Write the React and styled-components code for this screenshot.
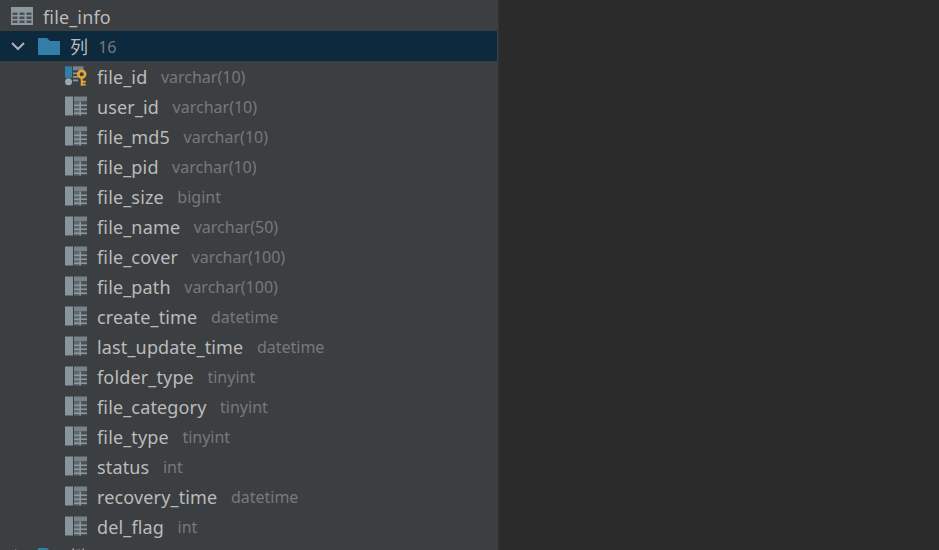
import React from "react";
import styled, { createGlobalStyle } from "styled-components";

const GlobalStyle = createGlobalStyle`
  html, body {
    margin: 0;
    padding: 0;
    height: 100%;
    background: #2b2b2b;
    overflow: hidden;
  }
`;

const Page = styled.div`
  display: flex;
  width: 939px;
  height: 550px;
  overflow: hidden;
  background: #2b2b2b;
  font-family: "Noto Sans", "Noto Sans CJK SC", sans-serif;
`;

const Tree = styled.div`
  width: 498px;
  height: 550px;
  padding-top: 1px;
  box-sizing: border-box;
  overflow: hidden;
  flex-shrink: 0;
  background: #3c3f41;
`;

const Divider = styled.div`
  width: 1px;
  background: #323232;
  flex-shrink: 0;
`;

const Row = styled.div`
  display: flex;
  align-items: center;
  width: 497px;
  height: 30px;
  box-sizing: border-box;
  padding-left: ${(p) => p.$indent}px;
  background: ${(p) => (p.$selected ? "#0d293e" : "transparent")};
`;

const Slot = styled.span`
  display: flex;
  align-items: center;
  justify-content: flex-start;
  width: ${(p) => p.$width}px;
  height: 30px;
  margin-left: ${(p) => p.$gap || 0}px;
  flex-shrink: 0;
`;

const Name = styled.span`
  margin-left: 10px;
  padding-top: 2px;
  font-size: 18px;
  line-height: 30px;
  letter-spacing: 0.15px;
  color: #bbbbbb;
  white-space: nowrap;
`;

const Type = styled.span`
  margin-left: ${(p) => p.$gap}px;
  padding-top: 2px;
  font-size: 16px;
  line-height: 30px;
  color: #787878;
  white-space: nowrap;
`;

const TableIcon = () => (
  <svg width="22" height="18" viewBox="0 0 22 18">
    <rect width="22" height="18" fill="#8d999f" />
    {[5.5, 9.5, 13.5].map((y) =>
      [1.5, 8.5, 15.5].map((x) => (
        <rect key={`${x}-${y}`} x={x} y={y} width="5" height="2.5" fill="#4a5053" />
      ))
    )}
  </svg>
);

const ChevronDown = () => (
  <svg width="14" height="9" viewBox="0 0 14 9">
    <path d="M1 1 L7 7 L13 1" fill="none" stroke="#afb1b3" strokeWidth="2" />
  </svg>
);

const ChevronRight = () => (
  <svg width="14" height="14" viewBox="0 0 14 14">
    <path d="M4 1 L10 7 L4 13" fill="none" stroke="#afb1b3" strokeWidth="2" />
  </svg>
);

const Folder = () => (
  <svg width="22" height="17" viewBox="0 0 22 17">
    <path d="M0 0 H9 L12 3 H22 V17 H0 Z" fill="#317fa6" />
  </svg>
);

const ColumnIcon = () => (
  <svg width="22" height="20" viewBox="0 0 22 20">
    <rect x="0" y="0.5" width="8" height="19" fill="#87969d" />
    <rect x="9" y="0.5" width="13" height="5" fill="#76838a" />
    <rect x="9" y="5.5" width="6" height="14" fill="#5f696e" />
    <rect x="15" y="5.5" width="7" height="14" fill="#4a5053" />
    <rect x="9" y="8.5" width="13" height="1.5" fill="#8d999f" />
    <rect x="9" y="12.5" width="13" height="1.5" fill="#8d999f" />
    <rect x="9" y="16.5" width="13" height="1.5" fill="#8d999f" />
    <rect x="14.5" y="5.5" width="1.5" height="14" fill="#8d999f" />
  </svg>
);

const KeyColumnIcon = () => (
  <svg width="25" height="22" viewBox="0 0 25 22">
    <rect x="0" y="0" width="8" height="13" fill="#317fa6" />
    <circle cx="4" cy="17.5" r="4" fill="#9aa7b0" />
    <rect x="9" y="0" width="12" height="4.5" fill="#76838a" />
    <rect x="9" y="7" width="6" height="2" fill="#8d999f" />
    <rect x="9" y="11" width="6" height="2" fill="#8d999f" />
    <rect x="9" y="15" width="6" height="2" fill="#8d999f" />
    <circle cx="19" cy="9" r="3.9" fill="none" stroke="#e5a63a" strokeWidth="3" />
    <path d="M19 13 V22 M19 17.5 H23.5 M19 20.8 H23.5" fill="none" stroke="#e5a63a" strokeWidth="2.2" />
  </svg>
);

const columns = [
  ["file_id", "varchar(10)"],
  ["user_id", "varchar(10)"],
  ["file_md5", "varchar(10)"],
  ["file_pid", "varchar(10)"],
  ["file_size", "bigint"],
  ["file_name", "varchar(50)"],
  ["file_cover", "varchar(100)"],
  ["file_path", "varchar(100)"],
  ["create_time", "datetime"],
  ["last_update_time", "datetime"],
  ["folder_type", "tinyint"],
  ["file_category", "tinyint"],
  ["file_type", "tinyint"],
  ["status", "int"],
  ["recovery_time", "datetime"],
  ["del_flag", "int"],
];

export default function App() {
  return (
    <Page>
      <GlobalStyle />
      <Tree>
        <Row $indent={11}>
          <Slot $width={22}>
            <TableIcon />
          </Slot>
          <Name>file_info</Name>
        </Row>
        <Row $indent={11} $selected>
          <Slot $width={14}>
            <ChevronDown />
          </Slot>
          <Slot $width={22} $gap={13}>
            <Folder />
          </Slot>
          <Name>列</Name>
          <Type $gap={10}>16</Type>
        </Row>
        {columns.map(([name, type], i) => (
          <Row key={name} $indent={65}>
            <Slot $width={22}>{i === 0 ? <KeyColumnIcon /> : <ColumnIcon />}</Slot>
            <Name>{name}</Name>
            <Type $gap={13.5}>{type}</Type>
          </Row>
        ))}
        <Row $indent={11}>
          <Slot $width={14}>
            <ChevronRight />
          </Slot>
          <Slot $width={22} $gap={13}>
            <Folder />
          </Slot>
          <Name>键</Name>
        </Row>
      </Tree>
      <Divider />
    </Page>
  );
}
